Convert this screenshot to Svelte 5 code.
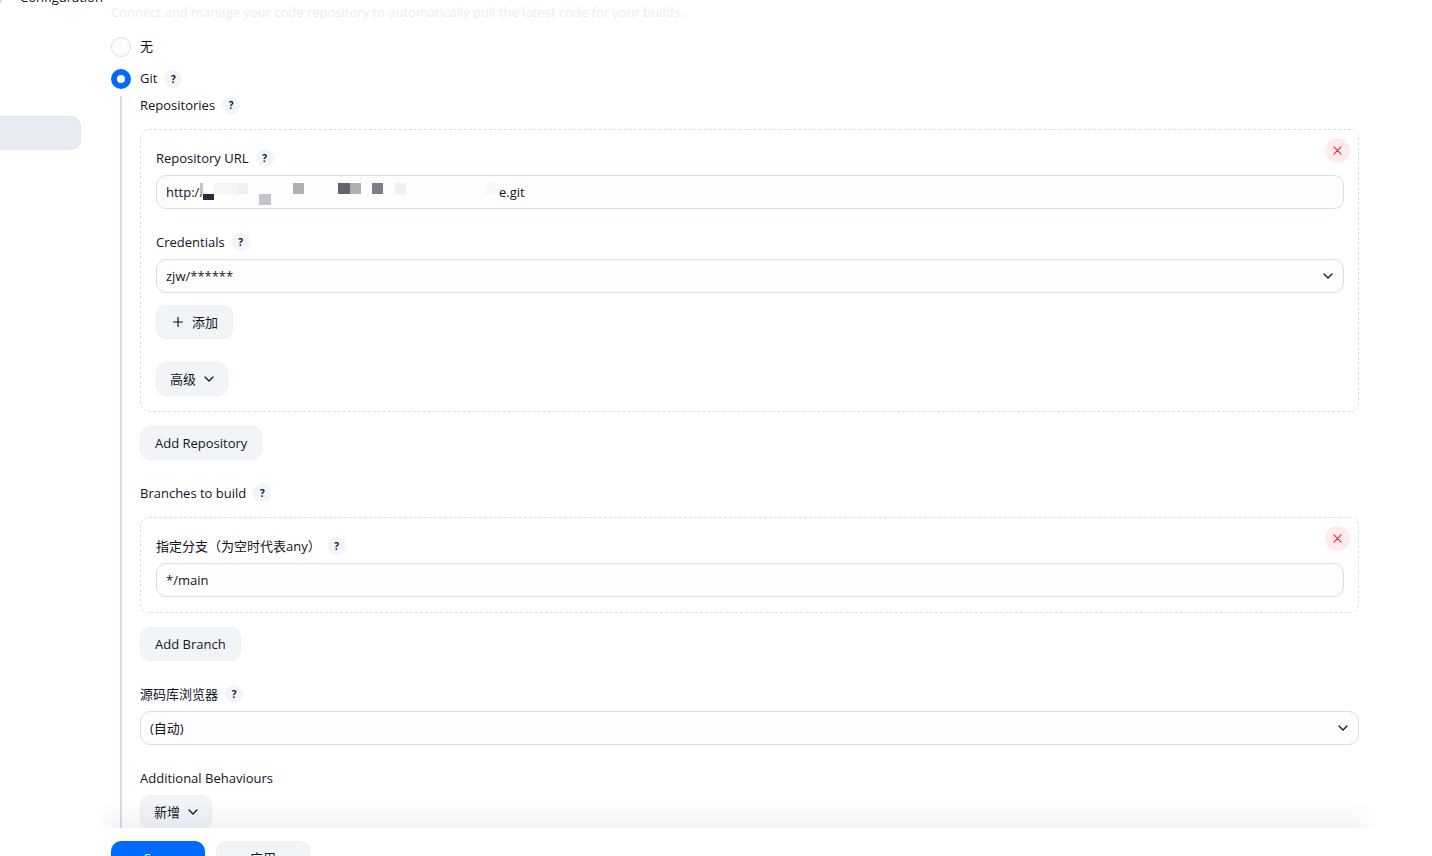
<script lang="ts">
  let scm = 'git';
  let repositoryUrl = 'http://';
  let credentials = 'zjw/******';
  let branch = '*/main';
  let browser = '(自动)';

  // Cells of the redaction mosaic over the host name: [x, y, width, height, fill]
  const mosaic: [number, number, number, number, string][] = [
    [0, 0, 3, 11, '#c4c3c9'],
    [3, 11, 11, 6, '#2d2a40'],
    [14, 0, 23, 11, '#f5f5f6'],
    [37, 0, 11, 11, '#f0f0f1'],
    [59, 11, 12, 11, '#c4c3c9'],
    [93, 0, 11, 11, '#afaeb5'],
    [138, 0, 12, 11, '#64626f'],
    [150, 0, 11, 11, '#afaeb5'],
    [172, 0, 11, 11, '#7f7e88'],
    [195, 0, 11, 11, '#f0f0f2'],
    [285, 0, 11, 11, '#f8f8f9'],
  ];
</script>

{#snippet help(topic: string)}
  <button type="button" class="help" aria-label="Help for {topic}">?</button>
{/snippet}

{#snippet chevron()}
  <svg class="chevron" viewBox="0 0 10 10" aria-hidden="true">
    <path d="M1 3l4 4 4-4" />
  </svg>
{/snippet}

{#snippet remove(label: string)}
  <button type="button" class="remove" aria-label={label}>
    <svg viewBox="0 0 10 10" aria-hidden="true"><path d="M1 1l8 8M9 1l-8 8" /></svg>
  </button>
{/snippet}

<div class="page">
  <header class="crumbs">
    <svg viewBox="0 0 6 20" aria-hidden="true"><path d="M5 1Q2 8 0 15" /></svg>
    <span>Configuration</span>
  </header>

  <nav class="side" aria-label="Sections">
    <a href="#scm" class="side-item" aria-label="Source code management"></a>
  </nav>

  <main id="scm">
    <p class="description">
      Connect and manage your code repository to automatically pull the latest code for your builds.
    </p>

    <div class="choice">
      <input type="radio" id="scm-none" name="scm" value="none" bind:group={scm} />
      <label for="scm-none">无</label>
    </div>
    <div class="choice">
      <input type="radio" id="scm-git" name="scm" value="git" bind:group={scm} />
      <label for="scm-git">Git</label>
      {@render help('Git')}
    </div>

    <div class="nested">
      <div class="label-row">
        <span>Repositories</span>
        {@render help('Repositories')}
      </div>
      <section class="chunk">
        {@render remove('Delete repository')}
        <div class="label-row">
          <label for="url">Repository URL</label>
          {@render help('Repository URL')}
        </div>
        <div class="control">
          <input type="text" id="url" bind:value={repositoryUrl} />
          <div class="redacted">
            <svg width="299" height="22" viewBox="0 0 299 22" aria-hidden="true">
              <rect x="2" width="297" height="22" fill="#fdfdfd" />
              {#each mosaic as [x, y, width, height, fill]}
                <rect {x} {y} {width} {height} {fill} />
              {/each}
            </svg>
            <span>e.git</span>
          </div>
        </div>

        <div class="label-row next">
          <label for="credentials">Credentials</label>
          {@render help('Credentials')}
        </div>
        <div class="control">
          <select id="credentials" bind:value={credentials}>
            <option>zjw/******</option>
          </select>
          {@render chevron()}
        </div>
        <button type="button" class="btn add">
          <svg class="plus" viewBox="0 0 10 10" aria-hidden="true"><path d="M5 0v10M0 5h10" /></svg>
          添加
        </button>
        <button type="button" class="btn advanced">高级 {@render chevron()}</button>
      </section>
      <button type="button" class="btn">Add Repository</button>

      <div class="label-row next">
        <span>Branches to build</span>
        {@render help('Branches to build')}
      </div>
      <section class="chunk">
        {@render remove('Delete branch')}
        <div class="label-row">
          <label for="branch">指定分支（为空时代表any）</label>
          {@render help('Branch')}
        </div>
        <div class="control">
          <input type="text" id="branch" bind:value={branch} />
        </div>
      </section>
      <button type="button" class="btn">Add Branch</button>

      <div class="label-row next">
        <label for="browser">源码库浏览器</label>
        {@render help('源码库浏览器')}
      </div>
      <div class="control">
        <select id="browser" bind:value={browser}>
          <option>(自动)</option>
        </select>
        {@render chevron()}
      </div>

      <div class="label-row next"><span>Additional Behaviours</span></div>
      <button type="button" class="btn behaviour">新增 {@render chevron()}</button>
    </div>

    <footer class="actions">
      <button type="submit" class="btn primary">Save</button>
      <button type="button" class="btn">应用</button>
    </footer>
  </main>
</div>

<style>
  :global(body) {
    background: #fff;
  }

  .page {
    position: relative;
    display: flex;
    height: 100vh;
    overflow: hidden;
    color: #14141f;
    font: 13px/18px 'Open Sans', 'Noto Sans', 'Noto Sans CJK SC', sans-serif;
  }

  .page * {
    box-sizing: border-box;
  }

  button,
  input,
  select {
    margin: 0;
    color: inherit;
    font: inherit;
  }

  svg {
    fill: none;
    stroke-linecap: round;
    stroke-linejoin: round;
  }

  .crumbs {
    position: absolute;
    top: -12px;
    left: 0;
    z-index: 2;
    display: flex;
    gap: 14px;
  }

  .crumbs svg {
    width: 6px;
    height: 20px;
    stroke: #b9c6da;
  }

  .side {
    flex: 0 0 81px;
    padding-top: 116px;
  }

  .side-item {
    display: block;
    height: 34px;
    border: 1px solid #e2e7ee;
    border-left: 0;
    border-radius: 0 10px 10px 0;
    background: #e7ebf2;
  }

  main {
    flex: 1;
    min-width: 0;
    padding: 3px 73px 0 30px;
  }

  .description {
    margin: 0 0 16px;
    color: #e9edf5;
  }

  .choice {
    display: flex;
    align-items: center;
    height: 20px;
    margin-bottom: 12px;
  }

  .choice label {
    margin-left: 9px;
    padding-bottom: 2px;
  }

  .choice + .choice {
    margin-bottom: 7px;
  }

  input[type='radio'] {
    appearance: none;
    width: 20px;
    height: 20px;
    border: 1px solid #d5dfec;
    border-radius: 50%;
    background: #fdfdfe;
  }

  input[type='radio']:checked {
    border: 6px solid #006aff;
    background: #fff;
  }

  .nested {
    display: flex;
    flex-direction: column;
    align-items: flex-start;
    margin-left: 9px;
    padding: 0 0 40px 18px;
    border-left: 2px solid #d3dfec;
  }

  .label-row {
    display: flex;
    align-items: center;
    height: 18px;
  }

  .label-row.next {
    margin-top: 24px;
  }

  .help {
    width: 18px;
    height: 18px;
    margin-left: 7px;
    padding: 0;
    border: 0;
    border-radius: 50%;
    background: #f1f4f8;
    font-size: 10px;
    font-weight: 700;
    line-height: 18px;
  }

  .chunk {
    position: relative;
    display: flex;
    flex-direction: column;
    align-items: flex-start;
    align-self: stretch;
    margin: 15px 0 14px;
    padding: 19px 14px 15px 15px;
    border: 1px dashed #d9dfe9;
    border-radius: 9px;
  }

  .remove {
    position: absolute;
    top: 8px;
    right: 8px;
    display: flex;
    align-items: center;
    justify-content: center;
    width: 25px;
    height: 25px;
    padding: 0;
    border: 0;
    border-radius: 50%;
    background: #ffebeb;
  }

  .remove svg {
    width: 9px;
    height: 9px;
    stroke: #f0222f;
    stroke-width: 1.2;
  }

  .control {
    position: relative;
    align-self: stretch;
    margin-top: 8px;
  }

  .control input,
  .control select {
    display: block;
    appearance: none;
    width: 100%;
    height: 34px;
    padding: 0 9px;
    border: 1px solid #d5dfec;
    border-radius: 10px;
    background: #fdfdfd;
  }

  .chevron {
    width: 10px;
    height: 10px;
    stroke: #14141f;
    stroke-width: 1.3;
  }

  .control .chevron {
    position: absolute;
    top: 12px;
    right: 11px;
    pointer-events: none;
  }

  .redacted {
    position: absolute;
    top: 8px;
    left: 44px;
    display: flex;
    pointer-events: none;
  }

  .btn {
    display: flex;
    align-items: center;
    height: 34px;
    padding: 0 14px;
    border: 1px solid #eceff4;
    border-radius: 10px;
    background: #f2f5f8;
  }

  .btn .chevron {
    margin-left: 8px;
  }

  .plus {
    width: 10px;
    height: 10px;
    margin: 0 9px 0 2px;
    stroke: #14141f;
    stroke-width: 1.2;
  }

  .add {
    margin-top: 12px;
  }

  .advanced {
    margin-top: 23px;
  }

  .advanced,
  .behaviour {
    padding: 0 13px;
  }

  .behaviour {
    margin-top: 8px;
  }

  /* Bar pinned to the bottom edge, partly below the fold */
  .actions {
    position: absolute;
    right: 73px;
    bottom: -34px;
    left: 111px;
    display: flex;
    gap: 11px;
    height: 62px;
    padding-top: 13px;
    background: #fff;
  }

  .actions::before {
    content: '';
    position: absolute;
    right: -16px;
    bottom: 100%;
    left: -16px;
    height: 28px;
    background: linear-gradient(rgba(30, 60, 110, 0), rgba(30, 60, 110, 0.06));
    mask-image: linear-gradient(90deg, transparent, #000 24px, #000 calc(100% - 24px), transparent);
    pointer-events: none;
  }

  .actions .btn {
    justify-content: center;
    min-width: 94px;
  }

  .actions .primary {
    border-color: #006aff;
    background: #006aff;
    color: #fff;
  }
</style>
